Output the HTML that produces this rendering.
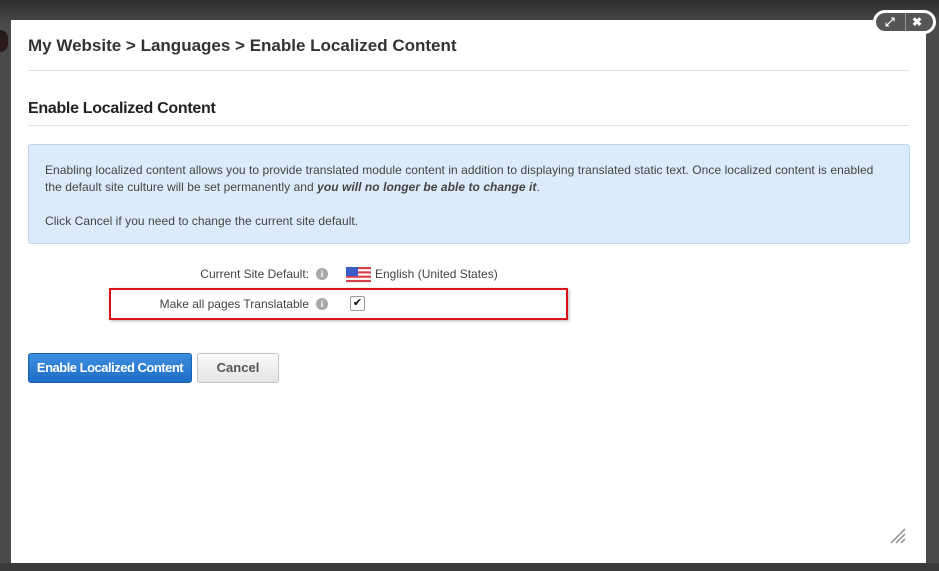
<!DOCTYPE html>
<html><head><meta charset="utf-8"><style>
*{margin:0;padding:0;box-sizing:border-box}
body{width:939px;height:571px;overflow:hidden;background:#3c3c3c;font-family:"Liberation Sans",Arial,sans-serif;position:relative}
.bgtop{position:absolute;left:0;top:0;width:939px;height:20px;background:linear-gradient(#2e2e2e,#454545)}
.bgl{position:absolute;left:0;top:20px;width:11px;height:551px;background:#4a4a4a}
.bgr{position:absolute;left:926px;top:20px;width:13px;height:551px;background:#4a4a4a}
.bgb{position:absolute;left:0;top:563px;width:939px;height:8px;background:#3a3a3a}
.modal{position:absolute;left:11px;top:20px;width:915px;height:543px;background:#fff}
.t1{position:absolute;left:17px;top:16px;font-size:17px;font-weight:bold;color:#333}
.hr1{position:absolute;left:17px;top:50px;width:881px;height:1px;background:#e2e2e2}
.t2{position:absolute;left:17px;top:80px;font-size:16px;font-weight:bold;color:#222;letter-spacing:-0.3px}
.hr2{position:absolute;left:17px;top:105px;width:881px;height:1px;background:#e2e2e2}
.info{position:absolute;left:17px;top:124px;width:882px;height:100px;background:#dbebfa;border:1px solid #bcd6ef;border-radius:3px;font-size:12px;color:#444;padding:17px 16px;line-height:17px;letter-spacing:0.05px;white-space:nowrap}
.lbl{position:absolute;font-size:12px;color:#444;text-align:right}
.ic{position:absolute;width:12px;height:12px;border-radius:50%;background:#a8a8a8;color:#fff;font-size:9px;font-weight:bold;text-align:center;line-height:12px;font-family:"Liberation Serif",serif}
.red{position:absolute;left:98px;top:268px;width:459px;height:32px;border:2px solid #d9121a;box-shadow:1px 1px 3px rgba(0,0,0,.3)}
.cb{position:absolute;left:339px;top:276px;width:15px;height:15px;border:1px solid #999;border-radius:2px;background:#fff;font-size:11px;line-height:13px;text-align:center;color:#000}
.btn1{position:absolute;left:17px;top:333px;width:164px;height:30px;background:linear-gradient(#3d8fe0,#1f6dc8);border:1px solid #1a5fb0;border-radius:3px;color:#fff;font-size:13px;font-weight:bold;text-align:center;line-height:28px;letter-spacing:-0.5px}
.btn2{position:absolute;left:186px;top:333px;width:82px;height:30px;background:linear-gradient(#fafafa,#e4e4e4);border:1px solid #c5c5c5;border-radius:3px;color:#555;font-size:13px;font-weight:bold;text-align:center;line-height:28px}
.ctl{position:absolute;left:873px;top:10px;width:63px;height:24px;border:3px solid #fff;border-radius:12px;background:#555;overflow:hidden}
.ctl span{position:absolute;top:1px;color:#fff;font-size:12px;font-weight:bold;line-height:16px}
</style></head><body>
<div class="bgtop"></div><div class="bgl"></div><div class="bgr"></div><div class="bgb"></div>
<div style="position:absolute;left:0;top:30px;width:8px;height:22px;border-radius:0 11px 11px 0;background:#2a1a1a"></div>
<div class="modal">
<div class="t1">My Website &gt; Languages &gt; Enable Localized Content</div>
<div class="hr1"></div>
<div class="t2">Enable Localized Content</div>
<div class="hr2"></div>
<div class="info">Enabling localized content allows you to provide translated module content in addition to displaying translated static text. Once localized content is enabled<br>the default site culture will be set permanently and <b><i>you will no longer be able to change it</i></b>.<br><br>Click Cancel if you need to change the current site default.</div>
<div class="lbl" style="left:100px;top:247px;width:198px">Current Site Default:</div>
<div class="ic" style="left:305px;top:248px">i</div>
<svg style="position:absolute;left:335px;top:247px" width="25" height="17" viewBox="0 0 25 17">
<rect width="25" height="17" fill="#fff"/>
<g fill="#d8404a"><rect y="0" width="25" height="2.2"/><rect y="4.3" width="25" height="2.2"/><rect y="8.6" width="25" height="2.2"/><rect y="12.9" width="25" height="2.2"/></g>
<rect width="12" height="9" fill="#3a5cc8"/></svg>
<div class="lbl" style="left:364px;top:247px;text-align:left">English (United States)</div>
<div class="red"></div>
<div class="lbl" style="left:100px;top:277px;width:198px">Make all pages Translatable</div>
<div class="ic" style="left:305px;top:278px">i</div>
<div class="cb">✔</div>
<div class="btn1">Enable Localized Content</div>
<div class="btn2">Cancel</div>
<svg style="position:absolute;left:878px;top:507px" width="18" height="18" viewBox="0 0 18 18" stroke="#999" stroke-width="1.6"><line x1="2" y1="16" x2="16" y2="2"/><line x1="7" y1="16" x2="16" y2="7"/><line x1="12" y1="16" x2="16" y2="12"/></svg>
</div>
<div class="ctl"><span style="left:9px">⤢</span><div style="position:absolute;left:29px;top:0;width:1px;height:18px;background:#999"></div><span style="left:36px">✖</span></div>
</body></html>
